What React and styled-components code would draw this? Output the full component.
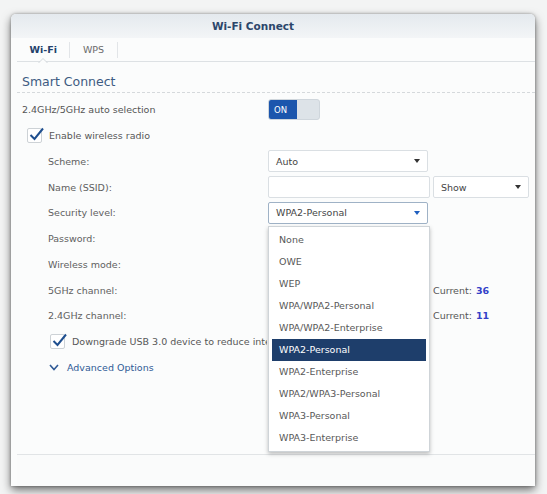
import React from "react";
import styled, { createGlobalStyle } from "styled-components";

const GlobalStyle = createGlobalStyle`
  body {
    margin: 0;
    background: #f3f4f4;
    font-family: "DejaVu Sans", Verdana, sans-serif;
  }
`;

const Page = styled.div`
  padding: 14px 12px 8px 11px;
`;

const Window = styled.div`
  width: 524px;
  height: 472px;
  display: flex;
  flex-direction: column;
  background: #fbfcfc;
  border-radius: 5px 5px 0 0;
  box-shadow: 0 4px 10px rgba(0, 0, 0, 0.55), 0 0 3px rgba(0, 0, 0, 0.35);
  overflow: hidden;
`;

const TitleBar = styled.div`
  height: 24px;
  flex: 0 0 24px;
  display: flex;
  align-items: center;
  justify-content: center;
  padding-right: 40px;
  font-size: 10.5px;
  font-weight: bold;
  color: #2c466b;
  background: linear-gradient(#e4e9ee, #f3f5f7);
`;

const Body = styled.div`
  flex: 1;
  display: flex;
  flex-direction: column;
  padding-left: 6px;
`;

const TabBar = styled.div`
  height: 24px;
  flex: 0 0 24px;
  display: flex;
  align-items: center;
  border-bottom: 1px solid #dde1e4;
  box-sizing: border-box;
`;

const Tab = styled.div`
  position: relative;
  height: 16px;
  padding: 0 12.5px;
  display: flex;
  align-items: center;
  border-right: 1px solid #e2e5e8;
  font-size: 9.5px;
  font-weight: ${(p) => (p.$active ? "bold" : "normal")};
  color: ${(p) => (p.$active ? "#23406a" : "#6a6a6a")};

  ${(p) =>
    p.$active &&
    `
    &::before, &::after {
      content: "";
      position: absolute;
      left: 50%;
      margin-left: -5px;
      border-left: 5px solid transparent;
      border-right: 5px solid transparent;
    }
    &::before {
      bottom: -5px;
      border-bottom: 5px solid #d4d9dd;
    }
    &::after {
      bottom: -6px;
      border-bottom: 5px solid #fbfcfc;
    }
  `}
`;

const Content = styled.div`
  flex: 1;
  padding-left: 5px;
`;

const SectionTitle = styled.div`
  height: 31px;
  padding-top: 9px;
  box-sizing: border-box;
  line-height: 22px;
  font-size: 12.5px;
  color: #3d5b82;
  border-bottom: 1px dashed #d5d9dc;
  margin-left: -5px;
  padding-left: 5px;
`;

const Form = styled.div`
  padding-top: 4px;
  font-size: 9.5px;
  color: #575757;
`;

const Row = styled.div`
  height: 25.75px;
  display: flex;
  align-items: center;
`;

const Label = styled.div`
  flex: 0 0 ${(p) => 246 - (p.$indent || 0)}px;
  padding-left: ${(p) => p.$indent || 0}px;
  color: ${(p) => (p.$indent ? "#606060" : "#555")};
`;

const CheckRow = styled(Row)`
  padding-left: ${(p) => p.$indent}px;
  gap: 7px;
  white-space: nowrap;
`;

const CheckText = styled.span`
  max-width: ${(p) => p.$max || 400}px;
  overflow: hidden;
`;

const Box = styled.div`
  position: relative;
  width: 13px;
  height: 13px;
  flex: 0 0 13px;
  border: 1px solid #cdd2d6;
  border-radius: 2px;
  background: #fff;

  svg {
    position: absolute;
    left: 0;
    top: -3px;
  }
`;

const Toggle = styled.div`
  width: 52px;
  height: 21px;
  display: flex;
  border: 1px solid #cfd6dc;
  border-radius: 3px;
  background: #dde3e8;
  box-sizing: border-box;
  overflow: hidden;
`;

const ToggleOn = styled.div`
  width: 28px;
  background: #1c56ad;
  color: #fff;
  font-size: 8.5px;
  display: flex;
  align-items: center;
  padding-left: 5px;
  box-sizing: border-box;
`;

const SelectWrap = styled.div`
  position: relative;
`;

const Select = styled.div`
  width: ${(p) => p.$width || 160}px;
  height: 22px;
  margin-left: ${(p) => p.$gap || 0}px;
  box-sizing: border-box;
  display: flex;
  align-items: center;
  justify-content: space-between;
  padding: 0 7px;
  background: #fff;
  border: 1px solid ${(p) => (p.$focus ? "#9fb2c6" : "#dadfe3")};
  border-radius: 2px;
  color: #454545;
`;

const Arrow = styled.span`
  margin-left: auto;
  width: 0;
  height: 0;
  border-left: 3.5px solid transparent;
  border-right: 3.5px solid transparent;
  border-top: 4px solid ${(p) => (p.$focus ? "#1f5fbf" : "#333")};
`;

const Input = styled.div`
  width: 162px;
  height: 22px;
  box-sizing: border-box;
  background: #fff;
  border: 1px solid #dadfe3;
  border-radius: 2px;
`;

const Current = styled.span`
  margin-left: 5px;
  color: #555;

  b {
    color: #3340c8;
    margin-left: 4px;
  }
`;

const Advanced = styled(Row)`
  padding-left: 27px;
  gap: 8px;
  color: #2f5a96;
`;

const Dropdown = styled.div`
  position: absolute;
  top: calc(100% + 2px);
  left: 0;
  z-index: 10;
  width: 162px;
  box-sizing: border-box;
  padding: 2px 0;
  background: #fff;
  border: 1px solid #cfd4d8;
  box-shadow: 0 2px 4px rgba(0, 0, 0, 0.25);
`;

const Option = styled.div`
  height: 22px;
  line-height: 22px;
  margin: 0 3px;
  padding-left: 7px;
  color: ${(p) => (p.$selected ? "#fff" : "#585858")};
  background: ${(p) => (p.$selected ? "#1e3e6b" : "transparent")};
`;

const Footer = styled.div`
  height: 31px;
  flex: 0 0 31px;
  border-top: 1px solid #e1e4e6;
  background: #fafbfb;
`;

const Check = () => (
  <svg width="17" height="17" viewBox="0 0 17 17">
    <path d="M2.5 9 L6.5 13 L15 2.5" fill="none" stroke="#1f4f8f" strokeWidth="2" />
  </svg>
);

const Chevron = () => (
  <svg width="10" height="7" viewBox="0 0 10 7">
    <polyline points="1,1 5,5.5 9,1" fill="none" stroke="#2f5a96" strokeWidth="1.6" />
  </svg>
);

const securityOptions = [
  "None",
  "OWE",
  "WEP",
  "WPA/WPA2-Personal",
  "WPA/WPA2-Enterprise",
  "WPA2-Personal",
  "WPA2-Enterprise",
  "WPA2/WPA3-Personal",
  "WPA3-Personal",
  "WPA3-Enterprise",
];

export default function App() {
  return (
    <Page>
      <GlobalStyle />
      <Window>
        <TitleBar>Wi-Fi Connect</TitleBar>
        <Body>
          <TabBar>
            <Tab $active>Wi-Fi</Tab>
            <Tab>WPS</Tab>
          </TabBar>
          <Content>
            <SectionTitle>Smart Connect</SectionTitle>
            <Form>
              <Row>
                <Label>2.4GHz/5GHz auto selection</Label>
                <Toggle>
                  <ToggleOn>ON</ToggleOn>
                </Toggle>
              </Row>
              <CheckRow $indent={5}>
                <Box>
                  <Check />
                </Box>
                <CheckText>Enable wireless radio</CheckText>
              </CheckRow>
              <Row>
                <Label $indent={26}>Scheme:</Label>
                <Select>
                  Auto
                  <Arrow />
                </Select>
              </Row>
              <Row>
                <Label $indent={26}>Name (SSID):</Label>
                <Input />
                <Select $width={96} $gap={3}>
                  Show
                  <Arrow />
                </Select>
              </Row>
              <Row>
                <Label $indent={26}>Security level:</Label>
                <SelectWrap>
                  <Select $focus>
                    WPA2-Personal
                    <Arrow $focus />
                  </Select>
                  <Dropdown>
                    {securityOptions.map((o) => (
                      <Option key={o} $selected={o === "WPA2-Personal"}>
                        {o}
                      </Option>
                    ))}
                  </Dropdown>
                </SelectWrap>
              </Row>
              <Row>
                <Label $indent={26}>Password:</Label>
                <Input />
              </Row>
              <Row>
                <Label $indent={26}>Wireless mode:</Label>
                <Select>
                  <Arrow />
                </Select>
              </Row>
              <Row>
                <Label $indent={26}>5GHz channel:</Label>
                <Select>
                  <Arrow />
                </Select>
                <Current>
                  Current:<b>36</b>
                </Current>
              </Row>
              <Row>
                <Label $indent={26}>2.4GHz channel:</Label>
                <Select>
                  <Arrow />
                </Select>
                <Current>
                  Current:<b>11</b>
                </Current>
              </Row>
              <CheckRow $indent={28}>
                <Box>
                  <Check />
                </Box>
                <CheckText $max={195}>Downgrade USB 3.0 device to reduce interference</CheckText>
              </CheckRow>
              <Advanced>
                <Chevron />
                Advanced Options
              </Advanced>
            </Form>
          </Content>
          <Footer />
        </Body>
      </Window>
    </Page>
  );
}
